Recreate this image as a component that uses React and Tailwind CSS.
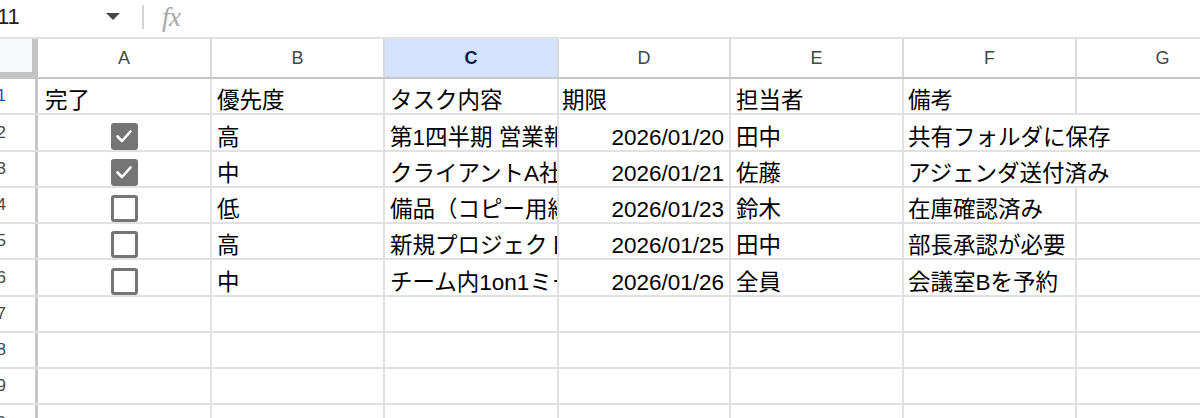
import React from "react";

const cols = [
  { key: "A", w: "w-[174px]" },
  { key: "B", w: "w-[173px]" },
  { key: "C", w: "w-[174px]" },
  { key: "D", w: "w-[172px]" },
  { key: "E", w: "w-[173px]" },
  { key: "F", w: "w-[173px]" },
  { key: "G", w: "w-[173px]" },
];

const rows = [
  { n: 1, a: "完了", b: "優先度", c: "タスク内容", d: "期限", e: "担当者", f: "備考", header: true },
  { n: 2, chk: true, b: "高", c: "第1四半期 営業報告書作成", d: "2026/01/20", e: "田中", f: "共有フォルダに保存", over: true },
  { n: 3, chk: true, b: "中", c: "クライアントA社との打ち合わせ", d: "2026/01/21", e: "佐藤", f: "アジェンダ送付済み", over: true },
  { n: 4, chk: false, b: "低", c: "備品（コピー用紙）発注", d: "2026/01/23", e: "鈴木", f: "在庫確認済み" },
  { n: 5, chk: false, b: "高", c: "新規プロジェクト企画書", d: "2026/01/25", e: "田中", f: "部長承認が必要" },
  { n: 6, chk: false, b: "中", c: "チーム内1on1ミーティング", d: "2026/01/26", e: "全員", f: "会議室Bを予約" },
  { n: 7 },
  { n: 8 },
  { n: 9 },
  { n: 10 },
];

function Checkbox({ checked }) {
  if (checked) {
    return (
      <div className="w-[27px] h-[27px] rounded-[3px] bg-[#757575] flex items-center justify-center">
        <svg width="20" height="20" viewBox="0 0 20 20" fill="none">
          <path d="M3.5 10.5 L8 15 L16.5 5.5" stroke="white" strokeWidth="2.6" strokeLinecap="round" strokeLinejoin="round" />
        </svg>
      </div>
    );
  }
  return <div className="w-[27px] h-[27px] rounded-[3px] border-[3px] border-[#757575] bg-white" />;
}

const cellBase = "h-full shrink-0 border-r-2 border-[#e1e1e1] flex items-end pb-0 leading-[25px] text-[22.5px] text-black";

function Row({ r }) {
  const empty = r.b === undefined;
  return (
    <div className="flex h-[36.25px] border-b-2 border-[#e1e1e1]">
      <div className="w-[38px] shrink-0 h-full border-r-[3px] border-[#c7c7c7] overflow-hidden flex items-center justify-end pr-[29px]">
        <span className={`text-[17px] whitespace-nowrap ${r.n === 1 ? "text-[#0b57d0]" : "text-[#444746]"}`}>{r.n}</span>
      </div>
      {empty ? (
        cols.map((c) => <div key={c.key} className={`${cellBase} ${c.w}`} />)
      ) : (
        <>
          <div className={`${cellBase} w-[174px] ${r.header ? "pl-[7px]" : "justify-center items-center"}`}>
            {r.header ? r.a : <Checkbox checked={r.chk} />}
          </div>
          <div className={`${cellBase} w-[173px] pl-[5px]`}>{r.b}</div>
          <div className={`${cellBase} w-[174px] pl-[5px] overflow-hidden whitespace-nowrap`}>{r.c}</div>
          <div className={`${cellBase} w-[172px] ${r.header ? "pl-[3px]" : "justify-end pr-[5px]"}`}>{r.d}</div>
          <div className={`${cellBase} w-[173px] pl-[5px]`}>{r.e}</div>
          <div
            className={`h-full shrink-0 w-[173px] flex items-end pb-0 leading-[25px] text-[22.5px] text-black pl-[4px] whitespace-nowrap ${
              r.over ? "relative z-10" : "border-r-2 border-[#e1e1e1]"
            }`}
          >
            {r.f}
          </div>
          <div className={`${cellBase} w-[173px]`} />
        </>
      )}
    </div>
  );
}

export default function App() {
  return (
    <div className="w-[1200px] h-[418px] overflow-hidden bg-white font-['Liberation_Sans','Noto_Sans_CJK_JP',sans-serif]">
      {/* formula bar */}
      <div className="h-[39px] flex items-center border-b-2 border-[#e1e1e1] pb-[3px]">
        <div className="w-[128px] shrink-0 flex items-center overflow-hidden">
          <span className="text-[22px] text-[#1f1f1f] ml-[-3px] leading-none">11</span>
          <div className="flex-1" />
          <svg width="14" height="8" viewBox="0 0 14 8" className="mr-[8px]">
            <path d="M0 0 L14 0 L7 7 Z" fill="#444746" />
          </svg>
        </div>
        <div className="w-[2px] h-[24px] bg-[#d4d4d4] ml-[14px]" />
        <span className="ml-[18px] text-[27px] italic text-[#a8a8a8] font-['Liberation_Serif',serif] leading-none tracking-[-0.5px]">fx</span>
      </div>

      {/* column headers */}
      <div className="flex h-[40px] border-b-2 border-[#c7c7c7]">
        <div className="w-[38px] shrink-0 h-full bg-[#f8f9fa] border-r-[6px] border-b-[5px] border-[#c4c4c4]" />
        {cols.map((c) => (
          <div
            key={c.key}
            className={`${c.w} shrink-0 h-full border-r-2 border-[#d9d9d9] flex items-center justify-center text-[18px] ${
              c.key === "C" ? "bg-[#d3e3fd] font-bold text-[#041e49]" : "bg-white text-[#444746]"
            }`}
          >
            {c.key}
          </div>
        ))}
      </div>

      {rows.map((r) => (
        <Row key={r.n} r={r} />
      ))}
    </div>
  );
}
